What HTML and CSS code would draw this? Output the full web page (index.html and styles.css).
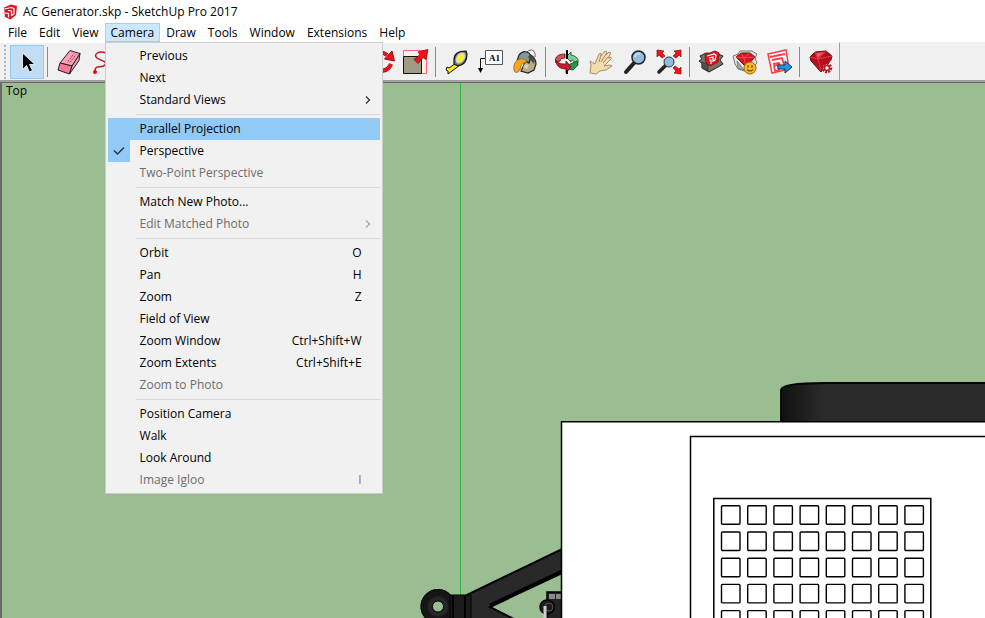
FILE: index.html
```html
<!DOCTYPE html>
<html lang="en">
<head>
<meta charset="utf-8">
<title>AC Generator.skp - SketchUp Pro 2017</title>
<link rel="stylesheet" href="styles.css">
</head>
<body>
<div class="window">
<header class="titlebar">
<svg class="logo" viewBox="0 0 16 16" aria-hidden="true"><path d="M1 3.500 8 .5l6 1.500-1 9-5.500 4.500L2 13z" fill="#e3101f"/><path d="M1.500 5 8 3.500l3 1v5.500L8.500 11.500V7L5 6.500M2 9l3.500.5v4" fill="none" stroke="#fff" stroke-width="1.200"/></svg>
<h1 class="title">AC Generator.skp - SketchUp Pro 2017</h1>
</header>
<nav class="menubar">
<button class="menu-title">File</button>
<button class="menu-title">Edit</button>
<button class="menu-title">View</button>
<div class="menu-anchor">
<button class="menu-title is-open" aria-expanded="true">Camera</button>
<div class="menu" role="menu">
<button class="item" role="menuitem"><span class="check"></span><span class="label">Previous</span></button>
<button class="item" role="menuitem"><span class="check"></span><span class="label">Next</span></button>
<button class="item" role="menuitem"><span class="check"></span><span class="label">Standard Views</span><svg class="arrow" viewBox="0 0 8 10"><path d="M2 1.500 5.500 5 2 8.500"/></svg></button>
<hr class="rule">
<button class="item is-hot" role="menuitem"><span class="check"></span><span class="label">Parallel Projection</span></button>
<button class="item" role="menuitem"><span class="check is-checked"><svg class="tick" viewBox="0 0 12 10"><path d="M1 4.500 4.500 8 11 1.500"/></svg></span><span class="label">Perspective</span></button>
<button class="item" role="menuitem" disabled><span class="check"></span><span class="label">Two-Point Perspective</span></button>
<hr class="rule">
<button class="item" role="menuitem"><span class="check"></span><span class="label">Match New Photo...</span></button>
<button class="item" role="menuitem" disabled><span class="check"></span><span class="label">Edit Matched Photo</span><svg class="arrow" viewBox="0 0 8 10"><path d="M2 1.500 5.500 5 2 8.500"/></svg></button>
<hr class="rule">
<button class="item" role="menuitem"><span class="check"></span><span class="label">Orbit</span><span class="keys">O</span></button>
<button class="item" role="menuitem"><span class="check"></span><span class="label">Pan</span><span class="keys">H</span></button>
<button class="item" role="menuitem"><span class="check"></span><span class="label">Zoom</span><span class="keys">Z</span></button>
<button class="item" role="menuitem"><span class="check"></span><span class="label">Field of View</span></button>
<button class="item" role="menuitem"><span class="check"></span><span class="label">Zoom Window</span><span class="keys">Ctrl+Shift+W</span></button>
<button class="item" role="menuitem"><span class="check"></span><span class="label">Zoom Extents</span><span class="keys">Ctrl+Shift+E</span></button>
<button class="item" role="menuitem" disabled><span class="check"></span><span class="label">Zoom to Photo</span></button>
<hr class="rule">
<button class="item" role="menuitem"><span class="check"></span><span class="label">Position Camera</span></button>
<button class="item" role="menuitem"><span class="check"></span><span class="label">Walk</span></button>
<button class="item" role="menuitem"><span class="check"></span><span class="label">Look Around</span></button>
<button class="item" role="menuitem" disabled><span class="check"></span><span class="label">Image Igloo</span><span class="keys keys-violet">I</span></button>
</div>
</div>
<button class="menu-title">Draw</button>
<button class="menu-title">Tools</button>
<button class="menu-title">Window</button>
<button class="menu-title">Extensions</button>
<button class="menu-title">Help</button>
</nav>
<div class="toolstrip">
<div class="toolbar" role="toolbar">
<span class="grip"></span>
<button class="tool is-active" aria-label="Select"><svg viewBox="0 0 28 28"><path d="M9.500 5v16.500l4-4 3 6.500 3-1.500-3-6h5.500z" fill="#000" stroke="#fff" stroke-width=".8"/></svg></button>
<span class="sep"></span>
<button class="tool" aria-label="Eraser"><svg viewBox="0 0 28 28"><g stroke="#222" stroke-linejoin="round"><path d="M5 15 15 2.500l10 3L17 18z" fill="#ff9db6"/><path d="M5 15 17 18l-2.500 8L3 22z" fill="#ff7698"/><path d="m17 18 8-12.500-1 7L14.500 26z" fill="#e8a3b3"/></g><path d="m13 13.500 6-8M15 14.500l6-8" stroke="#8b4256" stroke-dasharray="2 1"/></svg></button>
<button class="tool" aria-label="Freehand"><svg viewBox="0 0 28 28"><path d="M17 5C9 2 4 7 8 10s11 3 8 7-10-1-10 6" fill="none" stroke="#bd1927" stroke-width="1.500"/><circle cx="6" cy="24" r="2" fill="red"/></svg></button>
<span class="covered"></span>
<button class="tool" aria-label="Rotate"><svg viewBox="0 0 28 28"><path d="M4 12C7 3 15 3 20 7M24 16c-3 8-13 9-18 3" fill="none" stroke="#8c1018" stroke-width="4"/><path d="M4 12C7 3 15 3 20 7M24 16c-3 8-13 9-18 3" fill="none" stroke="#f5101a" stroke-width="3"/><path d="m25 3 2.500 10-10-2z" fill="#f5101a" stroke="#8c1018"/></svg></button>
<button class="tool" aria-label="Scale"><svg viewBox="0 0 28 28"><path d="M2.500 2.500h23v23h-23z" fill="#fff0f0" stroke="#ff6570"/><path d="M2.500 8.500h18v17h-18z" fill="#9d9c82" stroke="#111"/><path d="M27 1.500 17 4l2 2.500-6 5 4 4 5-6 3 2z" fill="#f5101a" stroke="#7b1015" stroke-width=".8"/></svg></button>
<span class="sep"></span>
<button class="tool" aria-label="Tape Measure"><svg viewBox="0 0 28 28"><path d="m13 15-7 5-2-1-1 3 2 1v3l12-9z" fill="#f7e913" stroke="#111"/><path d="M11 12C11 6 15 3 23 3l1 3c0 7-3 11-9 12l-4-2z" fill="#777" stroke="#111" stroke-width="1.200"/><ellipse cx="17.500" cy="10" rx="3.500" ry="5.500" transform="rotate(35 17.500 10)" fill="#f7ef30" stroke="#d6d6d6" stroke-width="1.200"/></svg></button>
<button class="tool" aria-label="Text"><svg viewBox="0 0 28 28"><path d="M8.500 2.500h17v14h-17z" fill="#fff" stroke="#555"/><path d="M8 10.500H3.500V20" fill="none" stroke="#111"/><path d="M1 20h5l-2.500 5z"/><text class="glyph" x="12" y="13">A1</text></svg></button>
<button class="tool" aria-label="Paint Bucket"><svg viewBox="0 0 28 28"><path d="M16 4c4-4 9-2 8 5" fill="none" stroke="#666"/><path d="M18 6c4 2 7 6 7 10l-2 6-6 3-7-2z" fill="#b5ac8a" stroke="#222" stroke-width="1.200"/><path d="M8 7c4-5 10-4 12 1l-2 7-5-3-7 1z" fill="#7c9a9d" stroke="#222" stroke-width="1.200"/><path d="M3 22c-1-7 3-12 10-11 3 1 3 4 0 4-4 1-3 6-5 8s-4 2-5-1z" fill="#f9a81b" stroke="#a56b13"/><path d="m17 9 6 7 1-5-5-5z" fill="#4b4a3e"/><path d="m12 19 2-3 4 1-2 4z" fill="#ded2a7"/></svg></button>
<span class="sep"></span>
<button class="tool" aria-label="Orbit"><svg viewBox="0 0 28 28"><path d="M12 6C4 6 1 10 3 15l4-2c0-2 2-3 5-3z" fill="#d65252" stroke="#511" stroke-width=".8"/><path d="M13 9l5-5v3c6 1 9 5 6 10l-3-1c1-3-1-4-3-4v2z" fill="#7ad196" stroke="#142" stroke-width=".8"/><path d="m15 17 9-4 1 4-5 5-5-1z" fill="#229c4b" stroke="#142" stroke-width=".8"/><path d="M3 12c2 4 6 4 10 4v-3l5 6-5 6v-4C7 21 3 18 3 12z" fill="#cd1933" stroke="#511" stroke-width=".8"/><path d="M14 2v9m0 11v4" stroke="#000" stroke-width="2"/></svg></button>
<button class="tool" aria-label="Pan"><svg viewBox="0 0 28 28"><path d="m3 25 1-8-1-4 3 2 2 1 4-10 2-1v3l4-5 2 1-1 3 3-3 2 1-3 5 3-1v2l-7 7 6-1 2 1-6 4-6 1-4 3z" fill="#f4dbad" stroke="#a49068" stroke-linejoin="round"/><path d="m14 7-2 7m7-8-5 8m7-5-5 6" stroke="#a68d60"/></svg></button>
<button class="tool" aria-label="Zoom"><svg viewBox="0 0 28 28"><path d="M13 15 5 24" stroke="#222" stroke-width="4" stroke-linecap="round"/><circle cx="17.500" cy="9.500" r="6.500" fill="#92bce0" stroke="#222" stroke-width="1.500"/><path d="M14 9c0-3 3-4 5-3" stroke="#cce3f8" fill="none" stroke-width="1.500"/></svg></button>
<button class="tool" aria-label="Zoom Extents"><svg viewBox="0 0 28 28"><path d="m11 17-7 7" stroke="#222" stroke-width="3.500" stroke-linecap="round"/><circle cx="14" cy="14" r="5" fill="#92bce0" stroke="#333"/><g fill="#f5101a" stroke="#7b1015" stroke-width=".7"><path d="m2 2 7 1-2 2 3 3-3 2-3-3-2 2z"/><path d="m26 2-7 1 2 2-3 3 3 2 3-3 2 2z"/><path d="m26 26-7-1 2-2-3-3 2-2 4 3 2-2z"/></g></svg></button>
<span class="sep"></span>
<button class="tool" aria-label="3D Warehouse"><svg viewBox="0 0 28 28"><path d="m3 8 6-3 12 1 5 2-3 4 3 4-5 3-9 5-7-4v-5l-3-2 3-2z" fill="#777568" stroke="#222"/><path d="m5 14 6 3v6l-6-3z" fill="#55544a" stroke="#222" stroke-width=".6"/><path d="m8 7 10-4 4 2-1 9-8 4-4-3z" fill="#e21825" stroke="#811"/><path d="m10 8 7-2 2 1-1 5-2 1V9l-4 1m0 2 2 0v4" fill="none" stroke="#fff" stroke-width="1.200"/></svg></button>
<button class="tool" aria-label="Extension Warehouse"><svg viewBox="0 0 28 28"><path d="m2 8 5-2 2-3 12 0 5 3-2 4 2 5-9 9-10-3-3-5z" fill="#e4e4e4" stroke="#777"/><path d="m6 13 7 9-6-2z" fill="#aaa" stroke="#555" stroke-width=".6"/><path d="m5 9 5-4h9l5 4-9 10z" fill="#db1422" stroke="#611"/><path d="m5 9 8 1 11-1M10 5l3 5 6-5M13 10l2 8" stroke="#f05a5a" stroke-width=".8" fill="none"/><circle cx="19" cy="20" r="6" fill="#fbbb16" stroke="#9b6812"/><path d="M17 17v3m4-3v3m-5 1.500q3 3 6 0" fill="none" stroke="#704b07" stroke-width="1.200"/></svg></button>
<button class="tool" aria-label="LayOut"><svg viewBox="0 0 28 28"><path d="m3 6 18-4 3 19-17 4z" fill="#fff" stroke="#ff3c46" stroke-width="1.500"/><path d="m5 9 15-3M7 12l10-2 2 7M8 16l6-1 1 3M9 18l4-1 1 5-4 1z" fill="none" stroke="#ff3c46" stroke-width="1.800"/><path d="M13 17h7v-4l7 6-7 6v-4h-7z" fill="#2495e8" stroke="#173753"/></svg></button>
<span class="sep"></span>
<button class="tool" aria-label="Extension Manager"><svg viewBox="0 0 28 28"><path d="m3 9 5-5 11-1 6 5-1 4-10 12L4 13z" fill="#b80f1c" stroke="#611"/><path d="m3 9 8 2 14-3M8 4l3 7 8-8M11 11l3 12" stroke="#e84853" stroke-width=".8" fill="none"/><path d="m9 5 8-1-6 6z" fill="#ef5962"/><circle cx="20" cy="20" r="4" fill="#fff" stroke="#b81625" stroke-width="2.500" stroke-dasharray="2 1"/><circle cx="20" cy="20" r="2.500" fill="#fff" stroke="#b81625" stroke-width="1.500"/></svg></button>
</div>
</div>
<main class="viewport">
<p class="view-name">Top</p>
<svg class="model" viewBox="0 0 983 535" preserveAspectRatio="xMinYMin slice" role="img" aria-label="Top view of the generator model">
<defs>
<linearGradient id="drum"><stop offset="0" stop-color="#111"/><stop offset=".2" stop-color="#2a2a2a"/></linearGradient>
<radialGradient id="ring"><stop offset=".35" stop-color="#151515"/><stop offset=".7" stop-color="#2b2b2b"/><stop offset="1" stop-color="#151515"/></radialGradient>
<rect id="vent" width="18.500" height="18.500" rx="1"/>
<g id="vent-row"><use href="#vent" x="719.500"/><use href="#vent" x="745.700"/><use href="#vent" x="771.900"/><use href="#vent" x="798.100"/><use href="#vent" x="824.300"/><use href="#vent" x="850.500"/><use href="#vent" x="876.700"/><use href="#vent" x="902.900"/></g>
</defs>
<path d="M458.500 0v512" stroke="#35b43d"/>
<path d="M779 339v-32q0-7 44-7h162v39z" fill="url(#drum)"/><path d="M779 339v-32q0-7 44-7h162" fill="none" stroke="#000" stroke-width="1.800"/>
<path d="m465 512 95-46v24l-72 34 28 14h-50z" fill="#292929" stroke="#000" stroke-width="2"/><path d="m488 522 72-34" stroke="#000" stroke-width="3"/>
<circle cx="436" cy="523.500" r="11.500" fill="none" stroke="url(#ring)" stroke-width="12"/><circle cx="436" cy="523.500" r="17" fill="none" stroke="#080808"/><circle cx="436" cy="523.500" r="5.500" fill="none" stroke="#080808"/>
<path d="M448 512h21v25h-21z" fill="#1b1b1b" stroke="#000"/><path d="M451 513v24m12-24v24" stroke="#000" stroke-width="2"/>
<path d="M545 509h16v30h-16z" fill="#222" stroke="#000" stroke-width="1.500"/><path d="M547 511h6v5h-6zm7 0h6v5h-6z" fill="#888c8d"/><circle cx="545" cy="524" r="7" fill="#1c1c1c" stroke="#000" stroke-width="1.500"/><circle cx="547" cy="524" r="4" fill="none" stroke="#555"/><path d="M543 523v14" stroke="#ccc" stroke-width="3"/>
<path d="M559.500 540V338.700h430V540z" fill="#fff" stroke="#000" stroke-width="1.500"/>
<path d="M688.500 540V353.500H990" fill="none" stroke="#000" stroke-width="1.500"/>
<path d="M711.800 540V415.500h217V540" fill="#fff" stroke="#000" stroke-width="1.500"/>
<g fill="#fff" stroke="#000" stroke-width="1.400"><use href="#vent-row" y="422.800"/><use href="#vent-row" y="449"/><use href="#vent-row" y="475.200"/><use href="#vent-row" y="501.400"/><use href="#vent-row" y="527.600"/></g>
</svg>
</main>
</div>
</body>
</html>
```
FILE: styles.css
```css
* { box-sizing: border-box; }
body {
  margin: 0;
  font: 12px/16px "Open Sans", "Noto Sans", sans-serif;
  color: #000;
  background: #fff;
}
button { font: inherit; color: inherit; border: 0; padding: 0; background: none; }
.window { display: flex; flex-direction: column; height: 100vh; overflow: hidden; }
.titlebar { display: flex; align-items: center; gap: 4px; height: 23px; padding-left: 3px; }
.logo { width: 16px; height: 16px; }
.title { margin: 0; font-size: 12px; font-weight: 400; }
.menubar { display: flex; height: 19px; padding-left: 2px; }
.menu-title { height: 19px; padding: 0 6px; white-space: nowrap; }
.menu-title.is-open { background: #cce8ff; box-shadow: inset 0 0 0 1px #99d1ff; }
.menu-anchor { position: relative; }
.menu {
  position: absolute;
  z-index: 2;
  top: 100%;
  left: 0;
  width: 278px;
  padding: 2px;
  border: 1px solid #ccc;
  background: #f1f1f1;
}
.item { display: flex; align-items: center; width: 100%; height: 22px; padding-right: 8px; text-align: left; }
.item:disabled { color: #6d6d6d; }
.item.is-hot { background: #91c9f7; }
.check { display: grid; place-items: center; width: 22px; height: 22px; margin-right: 10px; }
.check.is-checked { background: #91c9f7; }
.tick { width: 12px; height: 10px; fill: none; stroke: #333; stroke-width: 1.500; }
.label { flex: 1; }
.arrow { width: 8px; height: 10px; fill: none; stroke: #333; stroke-width: 1.300; }
.item:disabled .arrow { stroke: #aaa; }
.keys { padding-right: 10px; }
.keys-violet { color: #a05aa8; }
.rule { height: 1px; margin: 3px 0 3px 28px; border: 0; background: #d7d7d7; }
.toolstrip { height: 40px; background: #f0f0f0; border-bottom: 2px solid #a0a0a0; }
.toolbar { display: flex; align-items: center; width: max-content; height: 38px; padding: 0 1px 0 4px; border-right: 1px solid #a0a0a0; border-top: 1px solid #fff; }
.grip { width: 2px; height: 34px; margin-right: 4px; background: repeating-linear-gradient(#b4b4b4 0 2px, #f0f0f0 2px 4px); }
.tool { display: grid; place-items: center; width: 34px; height: 34px; }
.tool svg { width: 28px; height: 28px; }
.tool.is-active { background: #c2dcf3; box-shadow: inset 0 0 0 1px #90c8f6; }
.glyph { font: bold 9px "Liberation Serif", serif; }
.sep { width: 8px; height: 30px; background: linear-gradient(#8a8a8a, #8a8a8a) 3px 0 / 1px 100% no-repeat; }
.covered { width: 244px; }
.viewport { position: relative; flex: 1; min-height: 0; overflow: hidden; background: #9bbd92; border: solid #696969; border-width: 1px 0 0 2px; }
.view-name { position: absolute; top: 0; left: 4px; margin: 0; font-size: 12px; }
.model { display: block; width: 100%; height: 100%; }
```
